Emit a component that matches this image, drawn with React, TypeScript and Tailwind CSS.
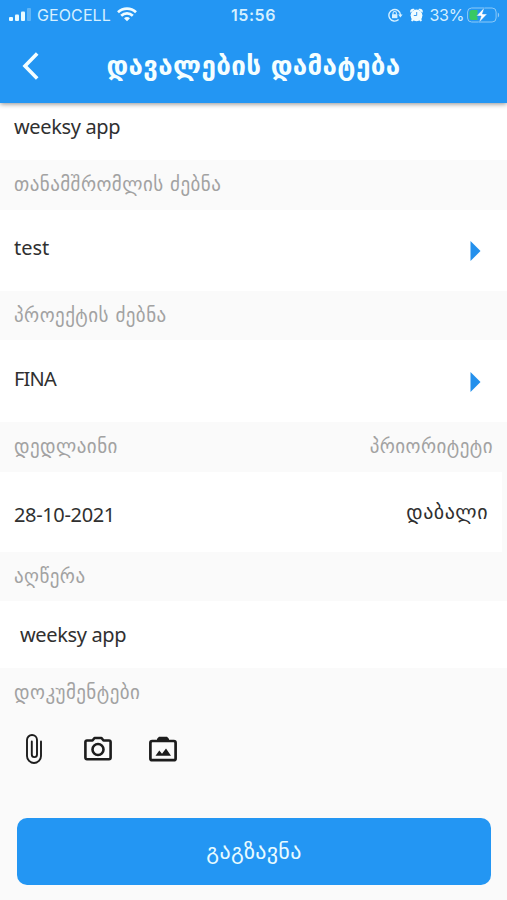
import type { ReactNode } from "react";

const georgian = "font-['DejaVu_Sans',sans-serif]";

function SectionLabel({ children, className = "" }: { children: ReactNode; className?: string }) {
  return (
    <div className={`flex justify-between bg-[#fafafa] px-[14px] text-[19px] leading-[49px] tracking-[0.45px] text-[#a2a2a2] ${georgian} ${className}`}>
      {children}
    </div>
  );
}

function Arrow() {
  return (
    <svg width="11" height="20" viewBox="0 0 11 20" fill="#2490ec">
      <path d="M.5 0 10.5 10 .5 20Z" />
    </svg>
  );
}

function StatusBar() {
  return (
    <div className="grid h-7 grid-cols-3 items-center pt-px text-[#d5f0ff]">
      <div className="flex items-center pl-[9px]">
        <svg width="24" height="13" viewBox="0 0 24 13" fill="#e9fbff">
          <rect x="0" y="9" width="4" height="4" rx="1" />
          <rect x="6" y="6.5" width="4" height="6.5" rx="1" />
          <rect x="12" y="3.5" width="4" height="9.5" rx="1" />
          <rect x="18" y="0" width="4" height="13" rx="1" opacity=".3" />
        </svg>
        <span className="ml-1 text-[16px] leading-5 tracking-[0.1px]">GEOCELL</span>
        <svg className="ml-1.5" width="20" height="15" viewBox="0 0 20 15" fill="none" stroke="#effcff" strokeWidth="2.7">
          <path d="M1 5.2C6.1.3 13.9.3 19 5.2M4.2 8.7c3.3-3.2 8.3-3.2 11.6 0" />
          <path d="M7 11.2c1.7-1.5 4.3-1.5 6 0l-3 3.1Z" fill="#effcff" stroke="none" />
        </svg>
      </div>
      <span className="text-center text-[16px] leading-5 font-semibold tracking-[0.6px]">15:56</span>
      <div className="flex items-center justify-end pr-[7px]">
        <svg width="15" height="14" viewBox="0 0 15 14" fill="none" stroke="#d5f0ff" strokeWidth="1.4">
          <path d="M10.6 11.6A5.8 5.8 0 1 1 12.5 7" />
          <path d="M10.2 6.5h4.400l-2.200 3Z" fill="#d5f0ff" stroke="none" />
          <rect x="4" y="6.2" width="5.4" height="4" fill="#d5f0ff" stroke="none" />
          <path d="M5 6.5V5.2a1.7 1.7 0 0 1 3.4 0v1.3" strokeWidth="1.1" />
        </svg>
        <svg className="ml-[7px]" width="13" height="14" viewBox="0 0 13 14" fill="#effcff">
          <circle cx="6.5" cy="7.3" r="5.9" />
          <path d="M.4 4.8C-.5 1.5 2 0 4.800 1.200ZM12.600 4.800C13.500 1.500 11 0 8.200 1.200ZM2 10l2 2-1.500 1.600-1.400-.9ZM11 10 9 12l1.500 1.600 1.400-.9Z" />
          <path d="M6.7 4v3.5H3.8" fill="none" stroke="#3a9bef" strokeWidth="1" />
        </svg>
        <span className="ml-[7px] text-[16px] leading-5">33%</span>
        <svg className="ml-[3px]" width="33" height="16" viewBox="0 0 33 16">
          <rect x=".6" y="1" width="28.5" height="14" rx="4" fill="none" stroke="#8dcaf8" />
          <path d="M5 3h5.5v10H5a2.5 2.5 0 0 1-2.5-2.5v-5A2.5 2.5 0 0 1 5 3Z" fill="#38c964" />
          <path d="M30.8 5.5c1.8.8 1.8 4.2 0 5Z" fill="#8dcaf8" />
          <path d="M17.5.3 9.5 9h4.6l-2.2 6.7L20.2 7h-4.8Z" fill="#fff" stroke="#2994ed" strokeWidth=".5" />
        </svg>
      </div>
    </div>
  );
}

function AttachmentIcons() {
  return (
    <div className="flex h-[34px] items-center pl-[25px] text-[#1c1c1c]">
      <svg width="18" height="32" viewBox="0 0 18 32" fill="none" stroke="currentColor" strokeWidth="1.9" strokeLinecap="round">
        <path d="M16 8.5V23a7 7 0 0 1-14 0V7a5 5 0 0 1 10 0v14.500a2.600 2.600 0 0 1-5.200 0V8.500" />
      </svg>
      <svg className="ml-[41px]" width="28" height="26" viewBox="0 0 28 26" fill="none" stroke="currentColor" strokeWidth="2.6">
        <path d="M3 4.500h5.500l2-2.500h7l2 2.500H25q1.600 0 1.600 1.600v15.500q0 1.600-1.600 1.600H3q-1.600 0-1.600-1.600V6.100Q1.400 4.500 3 4.500Z" strokeLinejoin="round" />
        <circle cx="14" cy="13.500" r="5.500" />
      </svg>
      <svg className="ml-[37px]" width="28" height="26" viewBox="0 0 28 26" fill="none" stroke="currentColor" strokeWidth="2.7">
        <rect x="1.4" y="5" width="25.2" height="19.2" rx="1.8" />
        <path d="M8 5V2.800L10 .8h8l2 2V5Z" fill="currentColor" stroke="none" />
        <path d="m6.500 19.800 3.800-5.300 2.700 3.200 4-5.200 5 7.300Z" fill="currentColor" stroke="none" />
      </svg>
    </div>
  );
}

export default function App() {
  return (
    <div className="flex h-[900px] w-[507px] flex-col overflow-hidden bg-[#fafafa] font-['Noto_Sans',sans-serif] text-[20px] -tracking-[0.35px] text-[#303030]">
      <header className="relative h-[103px] shrink-0 bg-[#2396f3] font-['Inter','Liberation_Sans',sans-serif] shadow-[0_1px_5px_rgba(0,0,0,0.45)]">
        <StatusBar />
        <div className="grid h-[75px] grid-cols-[54px_1fr_54px] items-center">
          <svg className="ml-[22px]" width="17" height="28" viewBox="0 0 17 28" fill="none" stroke="#f4feff" strokeWidth="3.6">
            <path d="M15.2 1.5 3 14l12.2 12.5" />
          </svg>
          <h1 className={`pt-0.5 text-center text-[26px] font-bold whitespace-nowrap tracking-[0.35px] text-[#f4feff] ${georgian}`}>დავალების დამატება</h1>
        </div>
      </header>

      <div className="h-[57px] shrink-0 bg-white px-[14px] leading-[48px]">weeksy app</div>

      <SectionLabel className="h-[50px]">თანამშრომლის ძებნა</SectionLabel>
      <div className="flex h-[81px] items-center justify-between bg-white pr-[26px] pl-[14px]">
        <span className="pb-1.5 tracking-normal">test</span>
        <Arrow />
      </div>

      <SectionLabel className="h-[49px]">პროექტის ძებნა</SectionLabel>
      <div className="flex h-[82px] items-center justify-between bg-white pt-0.5 pr-[26px] pl-[14px]">
        <span className="pb-1.5 -tracking-[0.8px]">FINA</span>
        <Arrow />
      </div>

      <SectionLabel className="h-[50px]">
        <span>დედლაინი</span>
        <span>პრიორიტეტი</span>
      </SectionLabel>
      <div className="mr-[5px] flex h-[80px] items-center justify-between bg-white pr-[14px] pl-[14px]">
        <span className="pt-1.5">28-10-2021</span>
        <span className={`tracking-[0.5px] ${georgian}`}>დაბალი</span>
      </div>

      <SectionLabel className="h-[49px]">აღწერა</SectionLabel>
      <div className="h-[67px] shrink-0 bg-white px-5 leading-[67px]">weeksy app</div>

      <SectionLabel className="h-[64px]">დოკუმენტები</SectionLabel>
      <AttachmentIcons />

      <button className={`mr-4 ml-[17px] mt-[52px] h-[67px] shrink-0 rounded-[10px] bg-[#2396f3] text-[22px] tracking-[0.3px] text-[#e8fbff] ${georgian}`}>
        გაგზავნა
      </button>
    </div>
  );
}
